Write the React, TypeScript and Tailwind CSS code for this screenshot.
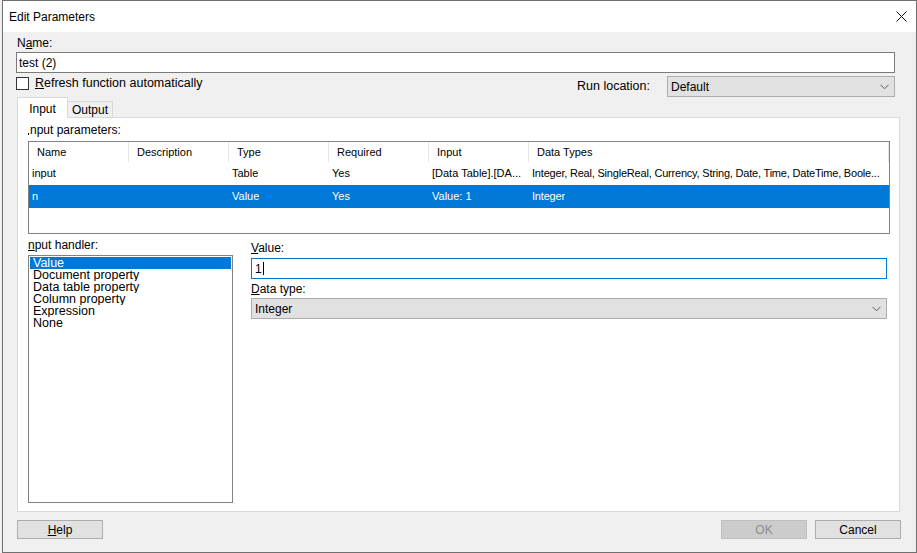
import React from "react";

const font = "font-['Liberation_Sans',Arial,sans-serif]";

const columns = [
  { title: "Name", width: "w-[100px]" },
  { title: "Description", width: "w-[100px]" },
  { title: "Type", width: "w-[100px]" },
  { title: "Required", width: "w-[100px]" },
  { title: "Input", width: "w-[100px]" },
  { title: "Data Types", width: "flex-1" },
];

const rows = [
  {
    cells: [
      "input",
      "",
      "Table",
      "Yes",
      "[Data Table].[DA...",
      "Integer, Real, SingleReal, Currency, String, Date, Time, DateTime, Boole...",
    ],
    selected: false,
  },
  {
    cells: ["n", "", "Value", "Yes", "Value: 1", "Integer"],
    selected: true,
  },
];

const handlers = [
  "Value",
  "Document property",
  "Data table property",
  "Column property",
  "Expression",
  "None",
];

function Chevron() {
  return (
    <svg width="9" height="6" viewBox="0 0 9 6" className="shrink-0">
      <polyline
        points="0.5,0.8 4.5,4.8 8.5,0.8"
        fill="none"
        stroke="#5a5a5a"
        strokeWidth="1"
      />
    </svg>
  );
}

function ComboBox({ value, className }: { value: string; className: string }) {
  return (
    <div
      className={`flex items-center justify-between h-[21px] bg-[#e1e1e1] border border-[#adadad] pl-[3px] pr-[5px] text-[12px] ${className}`}
    >
      <span>{value}</span>
      <Chevron />
    </div>
  );
}

function Button({
  children,
  disabled,
}: {
  children: React.ReactNode;
  disabled?: boolean;
}) {
  return (
    <div
      className={`flex items-center justify-center w-[86px] h-[19px] border text-[12px] ${
        disabled
          ? "bg-[#cccccc] border-[#bfbfbf] text-[#8c8c8c]"
          : "bg-[#e1e1e1] border-[#adadad] text-black"
      }`}
    >
      {children}
    </div>
  );
}

export default function App() {
  return (
    <div className={`w-[917px] h-[553px] bg-[#f0f0f0] ${font}`}>
      <div className="flex flex-col ml-[2px] w-[915px] h-[553px] border border-[#707070] bg-[#f0f0f0] text-black">
        {/* title bar */}
        <div className="flex items-center justify-between h-[31px] bg-white pl-[6px] pr-[9px]">
          <span className="text-[12px]">Edit Parameters</span>
          <svg width="11" height="11" viewBox="0 0 11 11">
            <path d="M0.5 0.5 L10.5 10.5 M10.5 0.5 L0.5 10.5" stroke="#111" strokeWidth="1" />
          </svg>
        </div>

        {/* name */}
        <div className="mt-[4px] pl-[14px] h-[14px] leading-[14px] text-[12px]">
          N<span className="underline">a</span>me:
        </div>
        <div className="mt-[2px] ml-[13px] w-[879px] h-[21px] border border-[#7a7a7a] bg-white flex items-center pl-[2px] text-[12px]">
          test (2)
        </div>

        {/* refresh + run location */}
        <div className="flex items-start mt-[3px] ml-[13px] w-[879px] h-[21px]">
          <div className="flex items-center mt-[1px] h-[13px]">
            <div className="w-[13px] h-[13px] border border-[#333333] bg-white" />
            <span className="ml-[6px] text-[12.5px] leading-[13px]">
              <span className="underline">R</span>efresh function automatically
            </span>
          </div>
          <div className="flex items-center ml-auto">
            <span className="text-[12.5px] mr-[17px]">Run location:</span>
            <ComboBox value="Default" className="w-[228px]" />
          </div>
        </div>

        {/* tabs */}
        <div className="flex items-end ml-[14px] h-[20px]">
          <div className="relative z-10 -mb-px flex items-start justify-center w-[51px] h-[21px] bg-white border border-b-0 border-[#d9d9d9] pt-[2px] text-[12px]">
            Input
          </div>
          <div className="flex items-center justify-center w-[45px] h-[16px] bg-[#f0f0f0] border border-l-0 border-b-0 border-[#d9d9d9] text-[12px]">
            Output
          </div>
        </div>

        {/* tab panel */}
        <div className="ml-[14px] w-[883px] h-[395px] bg-white border border-[#d9d9d9] pl-[10px]">
          <div className="mt-[5px] h-[14px] leading-[14px] text-[12px] flex items-end">
            <span className="inline-block w-[1px] h-[2px] bg-black mb-[2px] mr-[1px]" />
            <span>nput parameters:</span>
          </div>

          {/* parameter grid */}
          <div className="mt-[4px] w-[862px] h-[93px] border border-[#828282] flex flex-col text-[11px]">
            <div className="flex h-[20px]">
              {columns.map((c) => (
                <div
                  key={c.title}
                  className={`${c.width} h-full flex items-center pl-[8px] border-r border-[#e5e5e5]`}
                >
                  {c.title}
                </div>
              ))}
            </div>
            {rows.map((r, i) => (
              <div
                key={i}
                className={`flex h-[23px] ${r.selected ? "bg-[#0078d7] text-white" : ""}`}
              >
                {r.cells.map((cell, j) => (
                  <div
                    key={j}
                    className={`${columns[j].width} h-full flex items-center pl-[3px] overflow-hidden whitespace-nowrap ${
                      j === 5 ? "tracking-[-0.2px]" : ""
                    }`}
                  >
                    <span className="truncate">{cell}</span>
                  </div>
                ))}
              </div>
            ))}
          </div>

          {/* handler + value */}
          <div className="flex mt-[4px] gap-[18px]">
            <div className="flex flex-col w-[205px]">
              <div className="h-[14px] leading-[14px] text-[12px]">
                <span className="underline">n</span>put handler:
              </div>
              <div className="mt-[3px] h-[248px] border border-[#828282] bg-white p-[1px] text-[12.5px]">
                {handlers.map((h, i) => (
                  <div
                    key={h}
                    className={`h-[12px] leading-[12px] pl-[3px] overflow-hidden ${
                      i === 0 ? "bg-[#0078d7] text-white" : ""
                    }`}
                  >
                    {h}
                  </div>
                ))}
              </div>
            </div>

            <div className="flex flex-col w-[636px] pt-[3px]">
              <div className="h-[14px] leading-[14px] text-[12px]">
                <span className="underline">V</span>alue:
              </div>
              <div className="mt-[3px] h-[21px] border border-[#0078d7] bg-white flex items-center pl-[3px] text-[12px]">
                1<span className="inline-block w-px h-[13px] bg-black ml-[1px]" />
              </div>
              <div className="mt-[3px] h-[14px] leading-[14px] text-[12px]">
                <span className="underline">D</span>ata type:
              </div>
              <ComboBox value="Integer" className="mt-[2px] w-[636px]" />
            </div>
          </div>
        </div>

        {/* buttons */}
        <div className="flex items-center mt-[8px] ml-[14px] mr-[15px]">
          <Button>
            <span className="underline">H</span>elp
          </Button>
          <div className="ml-auto flex gap-[8px]">
            <Button disabled>OK</Button>
            <Button>Cancel</Button>
          </div>
        </div>
      </div>
    </div>
  );
}
